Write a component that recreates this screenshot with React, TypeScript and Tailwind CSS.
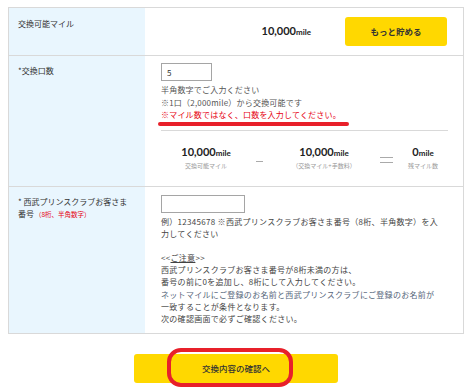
const jp = "font-['Noto_Sans_CJK_JP',sans-serif]";

function Mile({ value }: { value: string }) {
  return (
    <span className="font-['Lato','Noto_Sans_CJK_JP',sans-serif] text-[11px] font-bold leading-[14px] text-[#222]">
      {value}
      <span className="text-[8px]">mile</span>
    </span>
  );
}

function SumItem({ value, label, className }: { value: string; label: string; className: string }) {
  return (
    <div className={className + " flex flex-col items-center"}>
      <Mile value={value} />
      <div className="mt-[2px] text-[6px] leading-[8px] text-[#9a9a9a]">{label}</div>
    </div>
  );
}

export default function App() {
  return (
    <div className={`h-[390px] w-[474px] bg-white pl-[8px] pt-[7px] text-[#333] ${jp}`}>
      <div className="w-[456px] border border-[#d9d9d9]">
        {/* 交換可能マイル */}
        <div className="flex h-[48px] border-b border-[#d9d9d9]">
          <div className="w-[136px] shrink-0 bg-[#e9f6fe] px-[9px] pt-[10px] text-[8px] leading-[12px]">
            交換可能マイル
          </div>
          <div className="flex flex-1 items-center justify-end gap-[34px] pr-[16px]">
            <Mile value="10,000" />
            <button className="h-[29px] w-[102px] rounded-[3px] bg-[#ffd800] text-[8.5px] font-bold text-[#333]">
              もっと貯める
            </button>
          </div>
        </div>

        {/* 交換口数 */}
        <div className="flex border-b border-[#d9d9d9]">
          <div className="w-[136px] shrink-0 bg-[#e9f6fe] px-[9px] pt-[9px] text-[8px] leading-[12px]">
            *交換口数
          </div>
          <div className="flex-1 pl-[16px] pr-[15px] pt-[7px]">
            <input
              readOnly
              defaultValue="5"
              className="block h-[18px] w-[51px] border border-[#a5a5a5] pl-[5px] text-[8px] text-[#333] outline-none"
            />
            <div className="mt-[3px] text-[8px] leading-[12.5px] tracking-[0.2px] text-[#555]">
              <p>半角数字でご入力ください</p>
              <p>※1口（2,000mile）から交換可能です</p>
              <p className="relative text-[#e60012]">
                ※マイル数ではなく、口数を入力してください。
                <span className="absolute left-[-3px] top-[13px] h-[4px] w-[191px] rounded-full bg-[#e8202a]" />
              </p>
            </div>
            <div className="mt-[8px] flex border-t border-[#d9d9d9] pb-[16px] pt-[14px]">
              <SumItem className="w-[90px]" value="10,000" label="交換可能マイル" />
              <div className="flex w-[16px] justify-center pt-[16px]">
                <div className="h-px w-[7px] bg-[#aaa]" />
              </div>
              <SumItem className="w-[114px]" value="10,000" label="（交換マイル+手数料）" />
              <div className="flex w-[10px] justify-center pt-[12px]">
                <div className="flex w-[13px] shrink-0 flex-col gap-[4px]">
                  <div className="h-px bg-[#aaa]" />
                  <div className="h-px bg-[#aaa]" />
                </div>
              </div>
              <SumItem className="w-[55px] pl-[9px]" value="0" label="残マイル数" />
            </div>
          </div>
        </div>

        {/* 西武プリンスクラブお客さま番号 */}
        <div className="flex">
          <div className="w-[136px] shrink-0 bg-[#e9f6fe] px-[9px] pt-[9px] text-[8px] leading-[12px]">
            * 西武プリンスクラブお客さま
            <br />
            番号<span className="ml-[1px] text-[6.5px] text-[#e60012]">（8桁、半角数字）</span>
          </div>
          <div className="flex-1 pb-[8px] pl-[16px] pr-[8px] pt-[8px]">
            <input
              readOnly
              className="block h-[18px] w-[84px] border border-[#a5a5a5] text-[8px] outline-none"
            />
            <div className="mt-[3px] text-[8px] leading-[12.2px] tracking-[0.3px] text-[#444]">
              <p>
                例）12345678 ※西武プリンスクラブお客さま番号（8桁、半角数字）を入
                <br />
                力してください
              </p>
              <p className="mt-[12px]">
                &lt;&lt;<span className="underline">ご注意</span>&gt;&gt;
              </p>
              <p>西武プリンスクラブお客さま番号が8桁未満の方は、</p>
              <p>番号の前に0を追加し、8桁にして入力してください。</p>
              <p className="text-[#56657a]">ネットマイルにご登録のお名前と西武プリンスクラブにご登録のお名前が</p>
              <p>一致することが条件となります。</p>
              <p>次の確認画面で必ずご確認ください。</p>
            </div>
          </div>
        </div>
      </div>

      <div className="relative mt-[19px] ml-[126px] w-[204px]">
        <button className="h-[29px] w-full rounded-[3px] bg-[#ffd800] text-[8.5px] font-medium text-[#333]">
          交換内容の確認へ
        </button>
        <div className="pointer-events-none absolute left-[33px] top-[-5px] h-[39px] w-[126px] rounded-[14px] border-[4px] border-[#e8202a]" />
      </div>
    </div>
  );
}
